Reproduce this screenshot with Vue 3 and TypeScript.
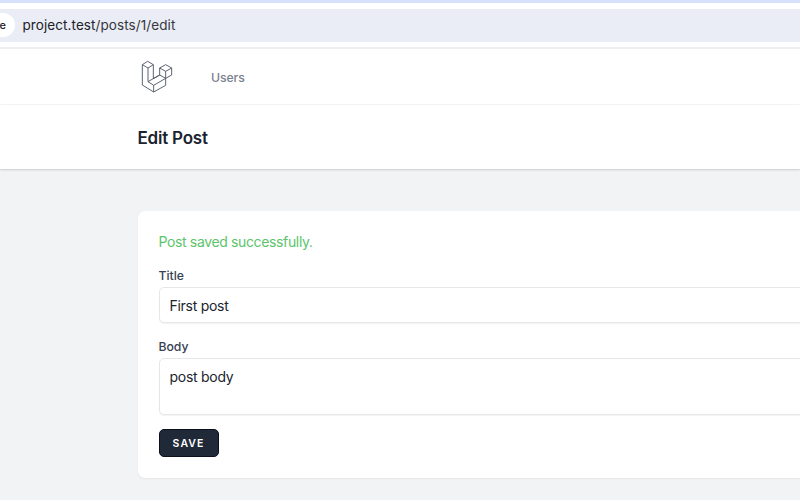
<script setup lang="ts">
import { ref } from 'vue'

const url = ref({ host: 'project.test', path: '/posts/1/edit' })
const title = ref('First post')
const body = ref('post body')
const status = ref('Post saved successfully.')
</script>

<template>
  <div class="window">
    <div class="toolbar">
      <div class="address">
        <span class="chip">e</span>
        <span class="url">{{ url.host }}<span class="path">{{ url.path }}</span></span>
      </div>
    </div>
    <nav class="nav">
      <svg class="logo" viewBox="0 0 102 102" fill="none" aria-hidden="true">
        <path d="M23 4 L7 14 V75 L41 96 L77 76 V55 L95 45 V24 L77 14 L59 24 V45 L40 56 V14 Z" />
        <path d="M7 14 L24 24 L40 14 M24 24 V65 L41 76 L77 55 M24 65 L59 45 L77 55 M41 76 V96 M59 24 L77 34 L95 24 M77 34 V55" />
      </svg>
      <a class="link">Users</a>
    </nav>
    <header class="header"><h2>Edit Post</h2></header>
    <main class="main">
      <form class="card" @submit.prevent>
        <p class="status">{{ status }}</p>
        <label for="title">Title</label>
        <input id="title" v-model="title" type="text" />
        <label for="body">Body</label>
        <textarea id="body" v-model="body"></textarea>
        <button type="submit">SAVE</button>
      </form>
    </main>
  </div>
</template>

<style>
body { margin: 0; overflow: hidden; }
</style>

<style scoped>
* { box-sizing: border-box; }
.window {
  width: 800px;
  height: 500px;
  overflow: hidden;
  display: flex;
  flex-direction: column;
  background: #f2f3f5;
  font-family: Inter, "Liberation Sans", sans-serif;
}
.toolbar {
  flex: none;
  height: 49px;
  padding-top: 6px;
  border-top: 3px solid #d6e2fb;
  border-bottom: 2px solid #eeeeef;
  background: #fff;
}
.address {
  height: 33px;
  padding-bottom: 1px;
  display: flex;
  align-items: center;
  background: #eaedf5;
}
.chip {
  width: 15px;
  height: 24px;
  padding-right: 9px;
  display: flex;
  align-items: center;
  justify-content: flex-end;
  border-radius: 0 12px 12px 0;
  background: #fff;
  font-size: 11px;
  font-weight: 500;
  color: #222;
}
.url {
  margin-left: 7.5px;
  font-size: 13.5px;
  line-height: 20px;
  letter-spacing: .08px;
  color: #202126;
}
.path { color: #35373c; }
.nav {
  flex: none;
  height: 56px;
  padding: 0 139.6px;
  display: flex;
  align-items: center;
  border-bottom: 1px solid #f4f5f6;
  background: #fff;
}
.logo { width: 34px; height: 34px; }
.logo path { stroke: #4b5361; stroke-width: 2.7; stroke-linejoin: round; }
.link {
  margin-left: 37.4px;
  padding-top: 1px;
  font-size: 12.25px;
  font-weight: 500;
  letter-spacing: -.1px;
  color: #7a818e;
}
.header {
  flex: none;
  height: 64px;
  padding: 2px 0 0 137.5px;
  display: flex;
  align-items: center;
  background: #fff;
  box-shadow: 0 1px 2px rgba(0, 0, 0, .17);
}
h2 {
  margin: 0;
  font-size: 17px;
  line-height: 25px;
  font-weight: 600;
  letter-spacing: -.22px;
  color: #1b2330;
}
.main { padding: 42px 0 0 138px; }
.card {
  width: 700px;
  height: 267px;
  padding: 20px 21px 21px 20.5px;
  border-radius: 7px;
  background: #fff;
  box-shadow: 0 1px 2px rgba(0, 0, 0, .06);
}
.status {
  margin: 0 0 14px;
  font-size: 14px;
  line-height: 21px;
  letter-spacing: -.36px;
  color: #5dc46b;
}
label {
  display: block;
  height: 21px;
  font-size: 12.25px;
  line-height: 20px;
  font-weight: 500;
  letter-spacing: -.04px;
  color: #374151;
}
input, textarea {
  display: block;
  width: 100%;
  margin: 0 0 14px;
  padding: 7px 10px;
  border: 1px solid #e6e7ea;
  border-radius: 5px;
  background: #fff;
  box-shadow: 0 1px 1px rgba(0, 0, 0, .05);
  font: 14px/21px Inter, "Liberation Sans", sans-serif;
  letter-spacing: -.28px;
  color: #20242d;
  resize: none;
  outline: none;
}
input { height: 36px; }
textarea { height: 57px; }
button {
  display: block;
  width: 60px;
  height: 28px;
  padding: 1px 0 0;
  border: 1px solid #0b101c;
  border-radius: 5px;
  background: #1f2937;
  font: 600 10.5px/14px Inter, "Liberation Sans", sans-serif;
  letter-spacing: 1.05px;
  color: #fff;
}
</style>
